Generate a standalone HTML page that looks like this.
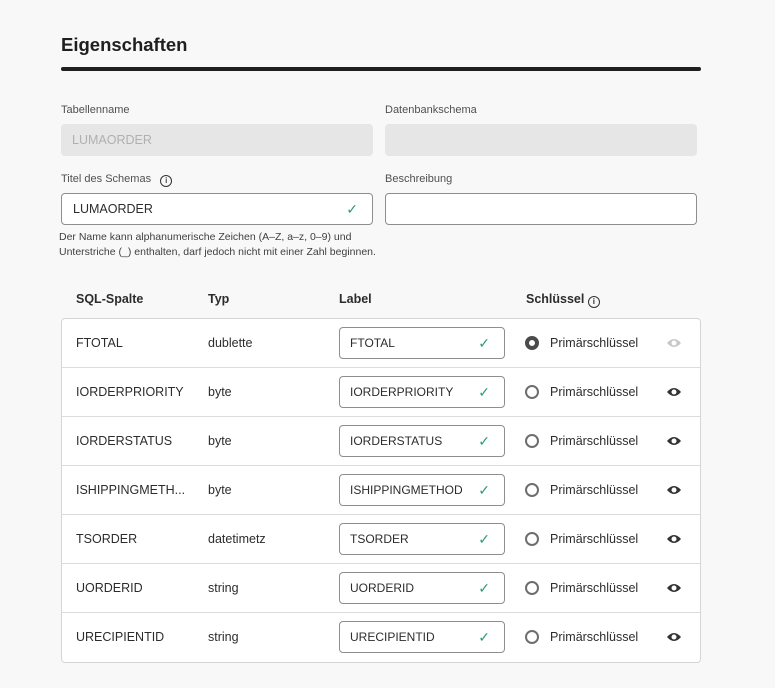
<!DOCTYPE html>
<html><head><meta charset="utf-8"><style>
body{margin:0;width:775px;height:688px;background:#f8f8f8;font-family:"Liberation Sans",sans-serif;color:#2c2c2c;position:relative;overflow:hidden}
.a{position:absolute}
h1{position:absolute;left:61px;top:34px;margin:0;font-size:18.5px;font-weight:bold;color:#1f1f1f}
.bar{left:61px;top:67px;width:640px;height:4px;background:#1f1f1f;border-radius:2px}
.lbl{font-size:11px;color:#505050}
.inp{box-sizing:border-box;height:32px;border:1px solid #8e8e8e;border-radius:4px;background:#fff;font-size:12.5px;padding:0 11px;line-height:30px}
.dis{border:none;background:#e6e6e6;color:#b0b0b0;line-height:32px}
.chk{position:absolute;right:14px;top:0;color:#2d9d78;font-size:14px}
.help{left:59px;top:230px;font-size:10.5px;line-height:15px;color:#404040}
.hd{top:292px;font-size:12.5px;font-weight:bold}
.tbl{left:61px;top:318px;width:638px;height:343px;border:1px solid #d5d5d5;border-radius:4px;background:#fff}
.row{position:absolute;left:0;width:638px;height:48px;border-bottom:1px solid #dcdcdc;font-size:12.5px}
.row > span{position:absolute;top:17px}
.row .inp{position:absolute;left:277px;top:8px;width:166px;padding:0 10px;font-size:12px}
.row .inp .chk{top:0;right:14px}
.rad{position:absolute;left:463px;top:17px;width:10px;height:10px;border:2px solid #6e6e6e;border-radius:50%}
.rad.on{border:4px solid #4b4b4b;width:6px;height:6px}
.eye{position:absolute;left:604px;top:18px}
.info{display:inline-block;width:10px;height:10px;border:1.3px solid #333;border-radius:50%;font-size:8px;line-height:10px;text-align:center;font-weight:bold;vertical-align:-1px}
</style></head><body>
<h1>Eigenschaften</h1>
<div class="a bar"></div>
<div class="a lbl" style="left:61px;top:104px">Tabellenname</div>
<div class="a lbl" style="left:385px;top:104px">Datenbankschema</div>
<div class="a inp dis" style="left:61px;top:124px;width:312px">LUMAORDER</div>
<div class="a inp dis" style="left:385px;top:124px;width:312px"></div>
<div class="a lbl" style="left:61px;top:173px">Titel des Schemas &nbsp;&nbsp;<span class="info">i</span></div>
<div class="a lbl" style="left:385px;top:173px">Beschreibung</div>
<div class="a inp" style="left:61px;top:193px;width:312px">LUMAORDER<span class="chk">✓</span></div>
<div class="a inp" style="left:385px;top:193px;width:312px"></div>
<div class="a help">Der Name kann alphanumerische Zeichen (A–Z, a–z, 0–9) und<br>Unterstriche (_) enthalten, darf jedoch nicht mit einer Zahl beginnen.</div>
<div class="a hd" style="left:76px">SQL-Spalte</div>
<div class="a hd" style="left:208px">Typ</div>
<div class="a hd" style="left:339px">Label</div>
<div class="a hd" style="left:526px">Schlüssel <span class="info">i</span></div>
<div class="a tbl">
<div class="row" style="top:0"><span style="left:14px">FTOTAL</span><span style="left:146px">dublette</span><div class="inp">FTOTAL<span class="chk">✓</span></div><div class="rad on"></div><span style="left:488px">Primärschlüssel</span><svg class="eye" width="16" height="12" viewBox="0 0 16 12"><path d="M1 6Q8-2 15 6Q8 14 1 6Z" fill="#c8c8c8"/><circle cx="8" cy="6" r="2.5" fill="#fff"/></svg></div>
<div class="row" style="top:49px"><span style="left:14px">IORDERPRIORITY</span><span style="left:146px">byte</span><div class="inp">IORDERPRIORITY<span class="chk">✓</span></div><div class="rad"></div><span style="left:488px">Primärschlüssel</span><svg class="eye" width="16" height="12" viewBox="0 0 16 12"><path d="M1 6Q8-2 15 6Q8 14 1 6Z" fill="#333"/><circle cx="8" cy="6" r="2.5" fill="#fff"/></svg></div>
<div class="row" style="top:98px"><span style="left:14px">IORDERSTATUS</span><span style="left:146px">byte</span><div class="inp">IORDERSTATUS<span class="chk">✓</span></div><div class="rad"></div><span style="left:488px">Primärschlüssel</span><svg class="eye" width="16" height="12" viewBox="0 0 16 12"><path d="M1 6Q8-2 15 6Q8 14 1 6Z" fill="#333"/><circle cx="8" cy="6" r="2.5" fill="#fff"/></svg></div>
<div class="row" style="top:147px"><span style="left:14px">ISHIPPINGMETH...</span><span style="left:146px">byte</span><div class="inp">ISHIPPINGMETHOD<span class="chk">✓</span></div><div class="rad"></div><span style="left:488px">Primärschlüssel</span><svg class="eye" width="16" height="12" viewBox="0 0 16 12"><path d="M1 6Q8-2 15 6Q8 14 1 6Z" fill="#333"/><circle cx="8" cy="6" r="2.5" fill="#fff"/></svg></div>
<div class="row" style="top:196px"><span style="left:14px">TSORDER</span><span style="left:146px">datetimetz</span><div class="inp">TSORDER<span class="chk">✓</span></div><div class="rad"></div><span style="left:488px">Primärschlüssel</span><svg class="eye" width="16" height="12" viewBox="0 0 16 12"><path d="M1 6Q8-2 15 6Q8 14 1 6Z" fill="#333"/><circle cx="8" cy="6" r="2.5" fill="#fff"/></svg></div>
<div class="row" style="top:245px"><span style="left:14px">UORDERID</span><span style="left:146px">string</span><div class="inp">UORDERID<span class="chk">✓</span></div><div class="rad"></div><span style="left:488px">Primärschlüssel</span><svg class="eye" width="16" height="12" viewBox="0 0 16 12"><path d="M1 6Q8-2 15 6Q8 14 1 6Z" fill="#333"/><circle cx="8" cy="6" r="2.5" fill="#fff"/></svg></div>
<div class="row" style="top:294px;border-bottom:none"><span style="left:14px">URECIPIENTID</span><span style="left:146px">string</span><div class="inp">URECIPIENTID<span class="chk">✓</span></div><div class="rad"></div><span style="left:488px">Primärschlüssel</span><svg class="eye" width="16" height="12" viewBox="0 0 16 12"><path d="M1 6Q8-2 15 6Q8 14 1 6Z" fill="#333"/><circle cx="8" cy="6" r="2.5" fill="#fff"/></svg></div>
</div>
</body></html>
